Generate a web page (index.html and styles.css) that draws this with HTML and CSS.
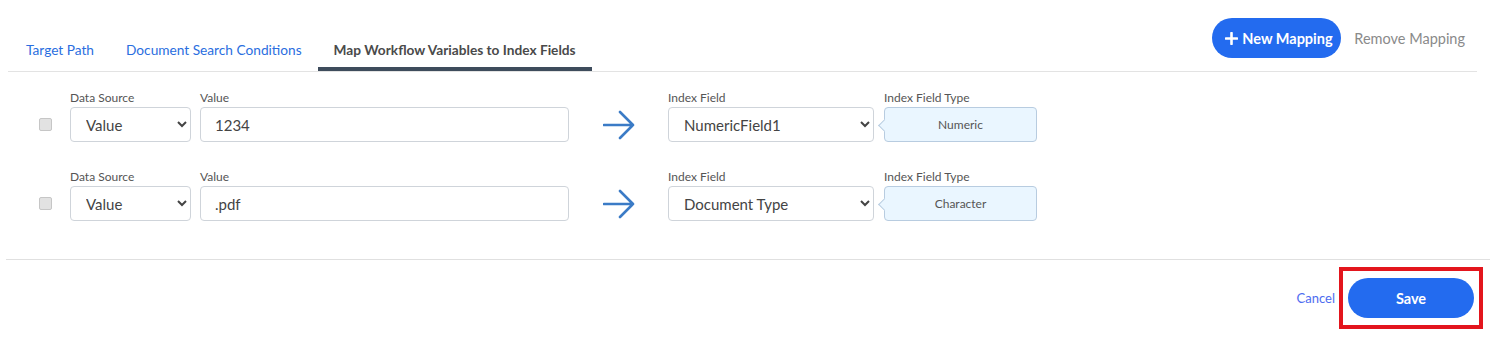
FILE: index.html
```html
<!DOCTYPE html>
<html lang="en">
<head>
<meta charset="UTF-8">
<title>Map Workflow Variables</title>
<link rel="stylesheet" href="styles.css">
</head>
<body>
<div class="header">
    <div class="tabs">
        <a class="tab" href="#">Target Path</a>
        <a class="tab" href="#">Document Search Conditions</a>
        <a class="tab active" href="#">Map Workflow Variables to Index Fields</a>
    </div>
    <div class="actions">
        <button class="btn-primary new-btn">
            <svg width="13" height="13" viewBox="0 0 13 13"><path d="M6.5 1v11M1 6.5h11" stroke="#fff" stroke-width="2.6" stroke-linecap="round"/></svg>
            New Mapping
        </button>
        <a class="remove-link" href="#">Remove Mapping</a>
    </div>
</div>

<div class="rows">
    <div class="row">
        <input type="checkbox" class="check">
        <div class="field">
            <label>Data Source</label>
            <select class="ctl source"><option>Value</option></select>
        </div>
        <div class="field">
            <label>Value</label>
            <input type="text" class="ctl value" value="1234">
        </div>
        <div class="arrow">
            <svg width="32" height="30" viewBox="0 0 32 30"><path d="M1 15h29M17 2l13 13-13 13" fill="none" stroke="#3b7bc6" stroke-width="2.6" stroke-linecap="round" stroke-linejoin="round"/></svg>
        </div>
        <div class="field">
            <label>Index Field</label>
            <select class="ctl index"><option>NumericField1</option></select>
        </div>
        <div class="field">
            <label>Index Field Type</label>
            <div class="type-box">Numeric</div>
        </div>
    </div>
    <div class="row">
        <input type="checkbox" class="check">
        <div class="field">
            <label>Data Source</label>
            <select class="ctl source"><option>Value</option></select>
        </div>
        <div class="field">
            <label>Value</label>
            <input type="text" class="ctl value" value=".pdf">
        </div>
        <div class="arrow">
            <svg width="32" height="30" viewBox="0 0 32 30"><path d="M1 15h29M17 2l13 13-13 13" fill="none" stroke="#3b7bc6" stroke-width="2.6" stroke-linecap="round" stroke-linejoin="round"/></svg>
        </div>
        <div class="field">
            <label>Index Field</label>
            <select class="ctl index"><option>Document Type</option></select>
        </div>
        <div class="field">
            <label>Index Field Type</label>
            <div class="type-box">Character</div>
        </div>
    </div>
</div>

<div class="divider"></div>

<div class="footer">
    <a class="cancel-link" href="#">Cancel</a>
    <div class="highlight">
        <button class="btn-primary save-btn">Save</button>
    </div>
</div>
</body>
</html>
```

FILE: styles.css
```css
body {
    font-family: Lato, 'Noto Sans', sans-serif;
    margin: 0;
    padding: 0;
    background: white;
    color: #444;
}

.header {
    display: flex;
    justify-content: space-between;
    align-items: flex-start;
    margin: 0 19px 0 8px;
    border-bottom: 1px solid #e3e3e3;
}

.tabs {
    display: flex;
    padding-left: 2px;
}

.tab {
    display: block;
    padding: 40px 16px 7px;
    line-height: 20px;
    font-size: 13.7px;
    color: #2a6ee0;
    text-decoration: none;
    border-bottom: 4px solid transparent;
}

.tab.active {
    color: #4a4a4a;
    font-weight: 700;
    border-bottom-color: #3e4c5c;
}

.actions {
    display: flex;
    align-items: center;
    padding: 18px 12px 0 0;
    gap: 13px;
}

.btn-primary {
    background-color: #236bef;
    color: white;
    border: none;
    border-radius: 20px;
    height: 40px;
    font-family: Lato, 'Noto Sans', sans-serif;
    font-size: 14.5px;
    font-weight: 700;
    cursor: pointer;
}

.new-btn {
    display: flex;
    align-items: center;
    gap: 4px;
    width: 129px;
    padding: 0 0 0 13px;
}

.remove-link {
    color: #8a8a8a;
    font-size: 14.5px;
    text-decoration: none;
}

.rows {
    padding: 19px 0 38px 39px;
}

.row {
    display: flex;
    align-items: flex-end;
    margin-bottom: 28px;
}

.row:last-child {
    margin-bottom: 0;
}

.check {
    appearance: none;
    width: 13px;
    height: 13px;
    margin: 0 18px 11px 0;
    background: #e2e2e2;
    border: 1px solid #c6c6c6;
    border-radius: 2px;
    box-sizing: border-box;
}

.field {
    display: flex;
    flex-direction: column;
}

.field label {
    font-size: 12px;
    line-height: 14px;
    margin-bottom: 2px;
    color: #555;
}

.ctl {
    height: 35px;
    box-sizing: border-box;
    border: 1px solid #cfd4da;
    border-radius: 4px;
    background: white;
    font-family: Lato, 'Noto Sans', sans-serif;
    font-size: 15px;
    color: #444;
}

select.ctl {
    padding: 0 6px 0 11px;
}

.source {
    width: 121px;
    margin-right: 9px;
}

.value {
    width: 369px;
    padding: 0 14px;
}

.index {
    width: 206px;
    margin-right: 10px;
}

.arrow {
    width: 99px;
    height: 35px;
    display: flex;
    align-items: center;
    justify-content: center;
}

.type-box {
    position: relative;
    width: 153px;
    height: 35px;
    box-sizing: border-box;
    border: 1px solid #b8cce0;
    border-radius: 4px;
    background: #eaf6ff;
    font-size: 12px;
    color: #555;
    display: flex;
    align-items: center;
    justify-content: center;
}

.type-box::before {
    content: '';
    position: absolute;
    left: -5px;
    top: 13px;
    width: 8px;
    height: 8px;
    background: #eaf6ff;
    border-left: 1px solid #b8cce0;
    border-bottom: 1px solid #b8cce0;
    transform: rotate(45deg);
}

.divider {
    margin: 0 6px;
    border-top: 1px solid #e0e0e0;
}

.footer {
    display: flex;
    justify-content: flex-end;
    align-items: center;
    margin: 7px 13px 0 0;
}

.cancel-link {
    color: #4e6cf0;
    font-size: 13px;
    text-decoration: none;
    margin-right: 4px;
}

.highlight {
    border: 4px solid #e3151d;
    padding: 7px 5px;
}

.save-btn {
    display: block;
    width: 126px;
}
```
